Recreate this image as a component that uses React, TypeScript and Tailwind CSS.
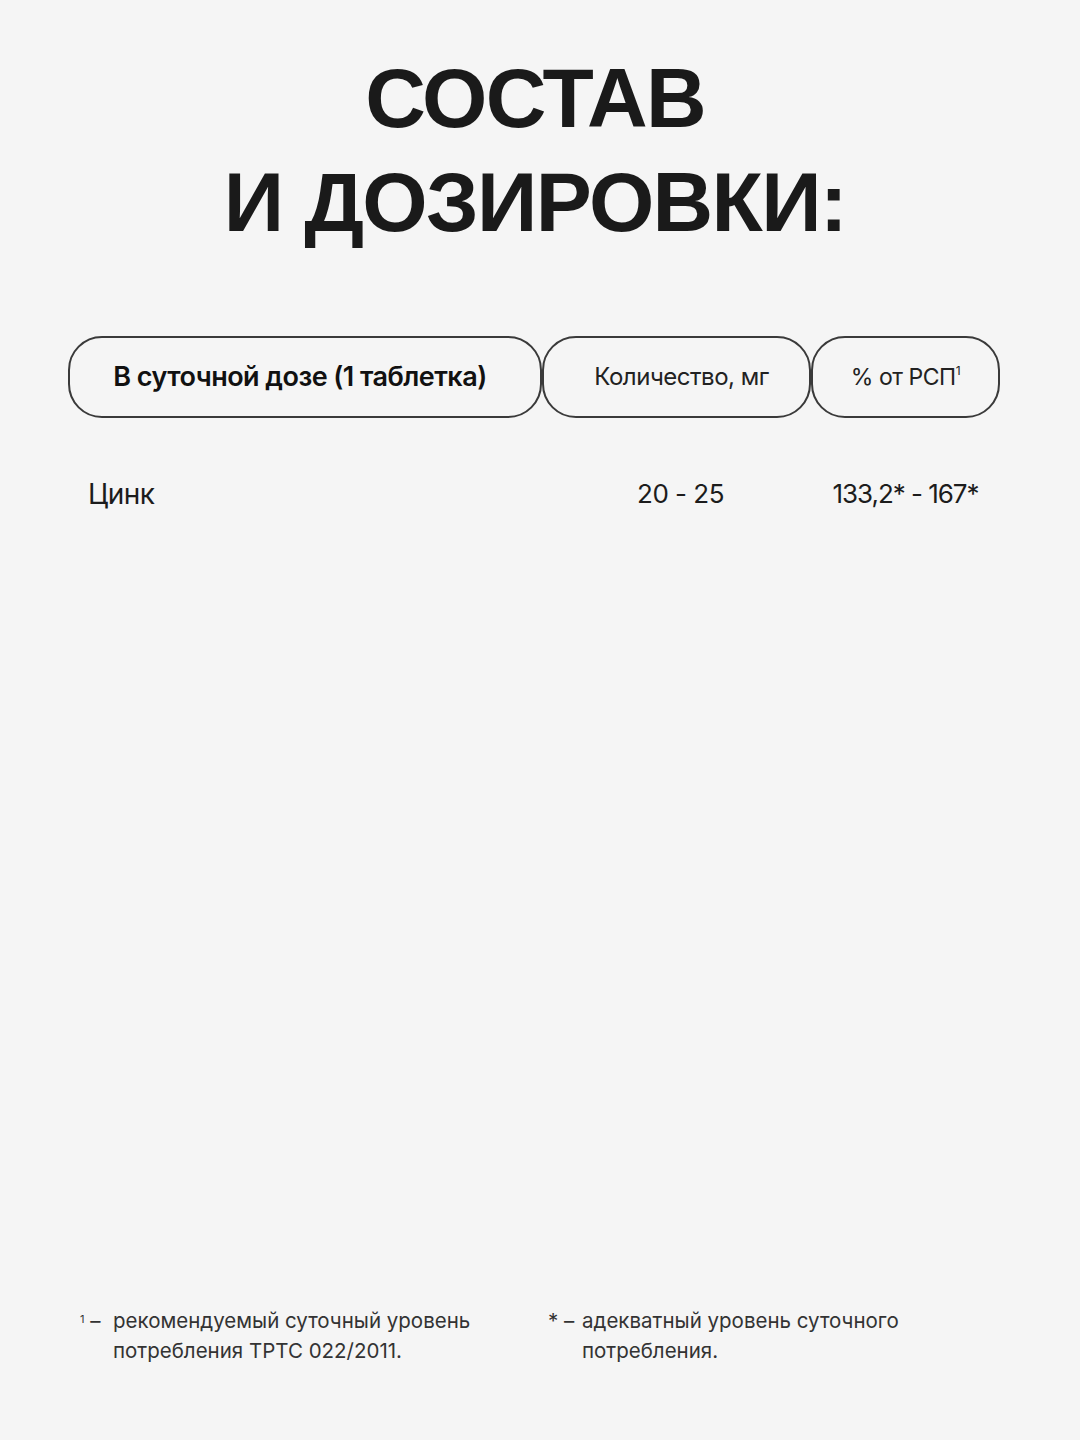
export default function App() {
  return (
    <div className="flex h-[1440px] w-[1080px] flex-col bg-[#f5f5f5] text-[#161616] [font-family:Inter,'Liberation_Sans',sans-serif]">
      {/* Title */}
      <h1 className="pr-[10px] pt-[46px] text-center text-[84px] font-bold leading-[104px] tracking-[-0.02em] text-[#1a1a1a] [font-family:'Liberation_Sans',Arial,sans-serif]">
        СОСТАВ
        <br />
        И ДОЗИРОВКИ:
      </h1>

      {/* Table header */}
      <div className="mt-[82px] flex px-[68px]">
        <div className="flex h-[82px] w-[474px] items-center justify-center rounded-[34px] border-2 border-[#3a3a3a] pr-[10px] text-[27px] font-semibold tracking-[-0.02em] text-[#111]">
          В суточной дозе (1 таблетка)
        </div>
        <div className="flex h-[82px] w-[269px] items-center justify-center rounded-[34px] border-2 border-[#3a3a3a] pl-[10px] text-[24px] tracking-[-0.02em] text-[#222]">
          Количество, мг
        </div>
        <div className="flex h-[82px] w-[189px] items-center justify-center rounded-[34px] border-2 border-[#3a3a3a] text-[23px] tracking-[-0.02em] text-[#222]">
          % от РСП<sup className="text-[12px]">1</sup>
        </div>
      </div>

      {/* Row */}
      <div className="mt-[56px] flex px-[68px] text-[26px] leading-[40px] tracking-[-0.02em] text-[#1c1c1c]">
        <div className="w-[474px] pl-[20px] text-[28px]">Цинк</div>
        <div className="w-[269px] pl-[8px] text-center">20 - 25</div>
        <div className="w-[189px] text-center tracking-[-0.04em]">133,2* - 167*</div>
      </div>

      {/* Footnotes */}
      <div className="mt-auto grid grid-cols-[468px_1fr] pb-[74px] pl-[80px] text-[20.5px] leading-[30px] text-[#333]">
        <div className="flex">
          <span className="w-[33px] shrink-0">
            <sup className="text-[11px]">1</sup> –
          </span>
          <span>
            рекомендуемый суточный уровень
            <br />
            потребления ТРТС 022/2011.
          </span>
        </div>
        <div className="flex">
          <span className="w-[34px] shrink-0">* –</span>
          <span>
            адекватный уровень суточного
            <br />
            потребления.
          </span>
        </div>
      </div>
    </div>
  )
}
